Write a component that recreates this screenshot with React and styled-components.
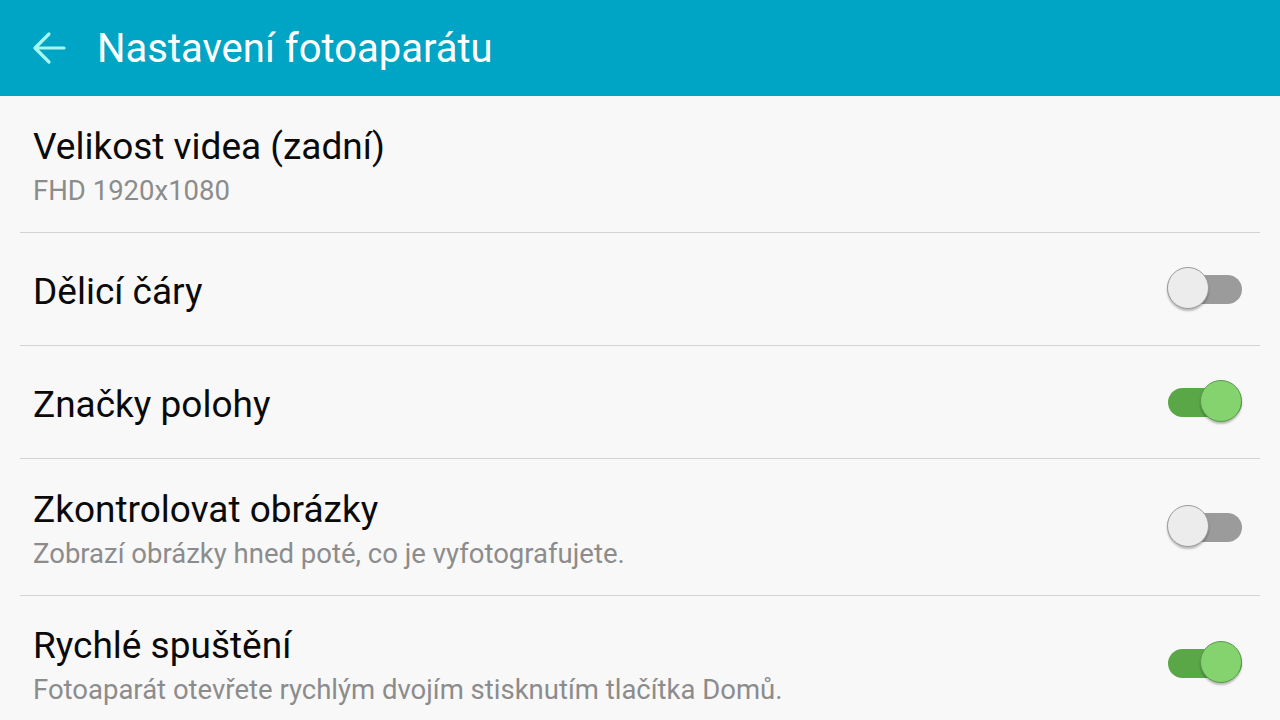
import React from "react";
import styled, { createGlobalStyle } from "styled-components";

const GlobalStyle = createGlobalStyle`
  html, body {
    margin: 0;
    padding: 0;
    background: #f8f8f8;
  }
  body {
    font-family: Roboto, "Noto Sans", sans-serif;
    overflow: hidden;
  }
`;

const Page = styled.div`
  width: 1280px;
  height: 720px;
  background: #f8f8f8;
  overflow: hidden;
`;

const Header = styled.header`
  height: 96px;
  background: #00a5c5;
  display: flex;
  align-items: center;
  padding-left: 31px;
  box-sizing: border-box;
`;

const BackButton = styled.div`
  width: 36px;
  height: 36px;
  display: flex;
  align-items: center;
  justify-content: center;
  margin-right: 30px;
`;

const Title = styled.h1`
  margin: 0;
  font-size: 40px;
  font-weight: 400;
  color: #ffffff;
  line-height: 48px;
  padding-top: 2px;
`;

const List = styled.div`
  display: flex;
  flex-direction: column;
`;

const Row = styled.div`
  display: flex;
  align-items: center;
  justify-content: space-between;
  height: ${(p) => p.height}px;
  margin: 0 20px;
  padding: 0 18px 0 13px;
  box-sizing: border-box;
  border-bottom: ${(p) => (p.last ? "none" : "1px solid #d3d3d3")};
`;

const Texts = styled.div`
  display: flex;
  flex-direction: column;
  gap: 5px;
  margin-top: 5px;
`;

const Label = styled.div`
  font-size: 37px;
  color: #0a0a0a;
  line-height: 44px;
`;

const Sub = styled.div`
  font-size: 27.5px;
  color: #8c8c8c;
  line-height: 34px;
`;

const Switch = styled.div`
  position: relative;
  width: 74px;
  height: 29px;
  border-radius: 15px;
  background: ${(p) => (p.on ? "#5aa748" : "#9b9b9b")};
`;

const Thumb = styled.div`
  position: absolute;
  top: 50%;
  left: ${(p) => (p.on ? "32px" : "-1px")};
  width: 42px;
  height: 42px;
  margin-top: -22px;
  border-radius: 50%;
  box-sizing: border-box;
  background: ${(p) => (p.on ? "#84d36e" : "#ececec")};
  border: 1px solid ${(p) => (p.on ? "#5a9a48" : "#9a9a9a")};
  box-shadow: 0 2px 2px rgba(0, 0, 0, 0.25);
`;

const Toggle = ({ on }) => (
  <Switch on={on}>
    <Thumb on={on} />
  </Switch>
);

const rows = [
  { label: "Velikost videa (zadní)", sub: "FHD 1920x1080", height: 137 },
  { label: "Dělicí čáry", toggle: false, height: 113 },
  { label: "Značky polohy", toggle: true, height: 113 },
  {
    label: "Zkontrolovat obrázky",
    sub: "Zobrazí obrázky hned poté, co je vyfotografujete.",
    toggle: false,
    height: 137,
  },
  {
    label: "Rychlé spuštění",
    sub: "Fotoaparát otevřete rychlým dvojím stisknutím tlačítka Domů.",
    toggle: true,
    height: 134,
    last: true,
  },
];

export default function App() {
  return (
    <Page>
      <GlobalStyle />
      <Header>
        <BackButton>
          <svg width="34" height="34" viewBox="0 0 34 34" fill="none">
            <path
              d="M32 17H3M17 3L3 17l14 14"
              stroke="#a6f6f0"
              strokeWidth="3.2"
              strokeLinecap="round"
              strokeLinejoin="round"
            />
          </svg>
        </BackButton>
        <Title>Nastavení fotoaparátu</Title>
      </Header>
      <List>
        {rows.map((r) => (
          <Row key={r.label} height={r.height} last={r.last}>
            <Texts>
              <Label>{r.label}</Label>
              {r.sub && <Sub>{r.sub}</Sub>}
            </Texts>
            {r.toggle !== undefined && <Toggle on={r.toggle} />}
          </Row>
        ))}
      </List>
    </Page>
  );
}
